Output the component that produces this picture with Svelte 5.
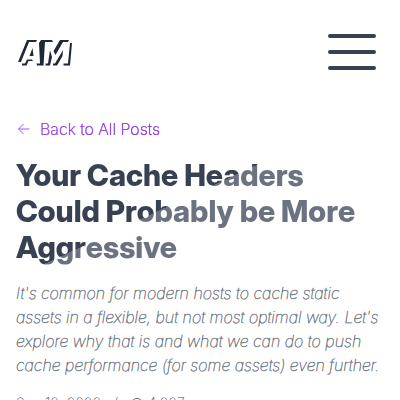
<script>
  const post = {
    title: 'Your Cache Headers Could Probably be More Aggressive',
    summary:
      "It's common for modern hosts to cache static assets in a flexible, but not most optimal way. Let's explore why that is and what we can do to push cache performance (for some assets) even further.",
    date: 'Sep 12, 2022',
    views: '4,227'
  };
</script>

<div class="page">
  <header>
    <a class="logo" href="/" aria-label="AM home">
      <svg viewBox="0 0 56 32" aria-hidden="true">
        <path d="M0 26L9 4H19L18 6H11L3 26Z" />
        <path d="M4 27.5H7L9 23.5H14L15 25H10.500L8.500 29.500H4Z" />
        <path d="M14.500 12L11.500 20H15.500Z" />
        <path d="M21 7L23 4H34L35 6H27L25.500 29.500H19L18.500 27.500H22Z" />
        <path d="M35.500 15L42 4H51L50 6H45L37.500 19Z" />
        <path d="M32 14L34 21L32 29.500H27.500V27.500H30Z" />
        <path d="M35 27.500H37L45 14L44.500 20L39 29.500H35Z" />
        <path d="M52 7H54L52 29.500H45.500V27.500H50Z" />
      </svg>
    </a>
    <button type="button" aria-label="Open menu">
      <span></span><span></span><span></span>
    </button>
  </header>

  <main>
    <a class="back" href="/posts">
      <svg viewBox="0 0 16 16" aria-hidden="true">
        <path d="M13.5 8H2.5M7.5 3L2.5 8L7.5 13" />
      </svg>
      <span>Back to All Posts</span>
    </a>
    <h1>{post.title}</h1>
    <p class="summary">{post.summary}</p>
    <div class="meta">
      <span>{post.date}</span>
      <span>/</span>
      <span class="views">
        <svg viewBox="0 0 16 16" aria-hidden="true">
          <path d="M1 8C4 1 12 1 15 8C12 15 4 15 1 8Z" />
          <circle cx="8" cy="8" r="2" />
        </svg>
        {post.views}
      </span>
    </div>
  </main>
</div>

<style>
  :global(body) {
    margin: 0;
    background: #fff;
  }
  .page {
    height: 100vh;
    overflow: hidden;
    font-family: Inter, 'Liberation Sans', sans-serif;
    font-size: 16px;
    line-height: 24px;
    font-weight: 200;
    color: #374151;
  }
  header {
    display: flex;
    align-items: center;
    justify-content: space-between;
    height: 104px;
    padding: 0 24px 0 18px;
  }
  .logo svg {
    display: block;
    width: 56px;
    height: 32px;
    fill: #1f2937;
  }
  button {
    display: flex;
    flex-direction: column;
    gap: 12px;
    width: 48px;
    padding: 0;
    border: 0;
    background: none;
  }
  button span {
    height: 4px;
    border-radius: 2px;
    background: #374151;
  }
  main {
    padding: 13px 16px 0;
  }
  .back {
    display: flex;
    align-items: center;
    gap: 8px;
    color: #9333ea;
    text-decoration: none;
  }
  .back svg {
    width: 16px;
    height: 16px;
    fill: none;
    stroke: #a855f7;
    stroke-width: 1;
  }
  .back span {
    color: transparent;
    background: linear-gradient(90deg, #9333ea, #7e22ce);
    background-clip: text;
    -webkit-text-stroke: 0.2px #9333ea;
  }
  h1 {
    margin: 16px 0;
    font-family: 'Inter Display', Inter, sans-serif;
    font-size: 30px;
    line-height: 36px;
    font-weight: 800;
    color: transparent;
    background: linear-gradient(155deg, #374151 43%, #6b7280 43%);
    background-clip: text;
  }
  .summary {
    margin: 0;
    color: #6b7280;
    font-weight: 100;
    font-style: italic;
    -webkit-text-stroke: 0.4px #6b7280;
  }
  .meta {
    display: flex;
    gap: 12px;
    margin-top: 16px;
    font-size: 14px;
    line-height: 20px;
    color: #4b5563;
  }
  .views {
    display: flex;
    align-items: center;
    gap: 4px;
  }
  .views svg {
    width: 14px;
    height: 14px;
    fill: none;
    stroke: currentColor;
  }
</style>
